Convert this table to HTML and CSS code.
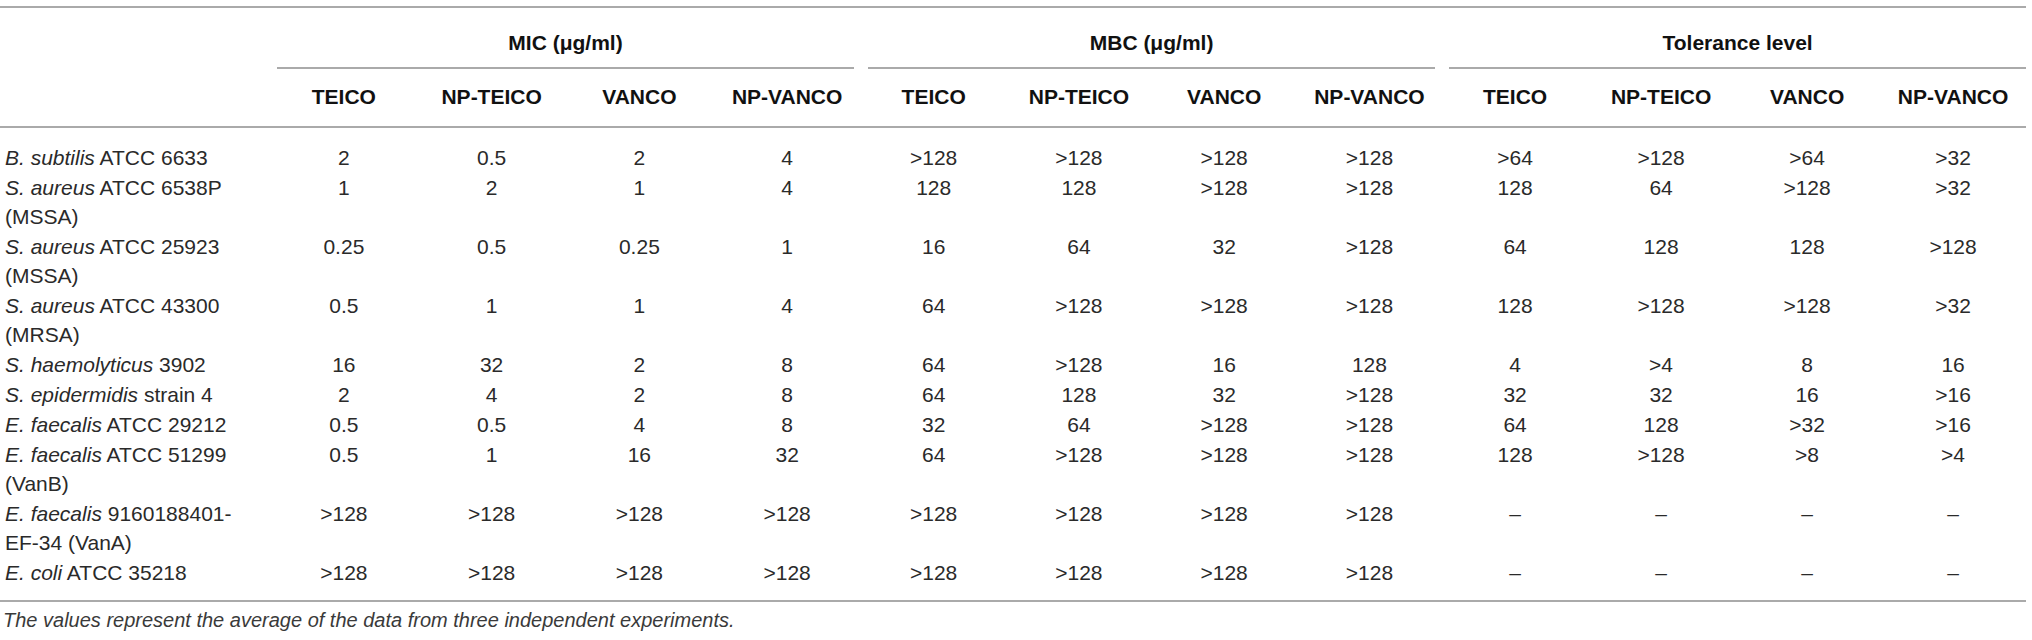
FILE: index.html
```html
<!DOCTYPE html>
<html lang="en">
<head>
    <meta charset="UTF-8">
    <title>MIC / MBC table</title>
    <link rel="stylesheet" href="styles.css">
</head>
<body>

<div class="wrap">
<table class="data">
    <colgroup>
        <col class="strain-col">
        <col span="4" class="mic-col">
        <col span="4" class="mbc-col">
        <col span="4" class="tol-col">
    </colgroup>
    <thead>
        <tr class="group-row">
            <th></th>
            <th colspan="4" class="group"><div class="group-title">MIC (μg/ml)</div></th>
            <th colspan="4" class="group"><div class="group-title">MBC (μg/ml)</div></th>
            <th colspan="4" class="group last"><div class="group-title">Tolerance level</div></th>
        </tr>
        <tr class="col-row">
            <th></th>
            <th>TEICO</th><th>NP-TEICO</th><th>VANCO</th><th>NP-VANCO</th>
            <th>TEICO</th><th>NP-TEICO</th><th>VANCO</th><th>NP-VANCO</th>
            <th>TEICO</th><th>NP-TEICO</th><th>VANCO</th><th>NP-VANCO</th>
        </tr>
    </thead>
    <tbody>
        <tr>
            <td class="strain"><i>B. subtilis</i> ATCC 6633</td>
            <td>2</td><td>0.5</td><td>2</td><td>4</td>
            <td>&gt;128</td><td>&gt;128</td><td>&gt;128</td><td>&gt;128</td>
            <td>&gt;64</td><td>&gt;128</td><td>&gt;64</td><td>&gt;32</td>
        </tr>
        <tr>
            <td class="strain"><i>S. aureus</i> ATCC 6538P<br>(MSSA)</td>
            <td>1</td><td>2</td><td>1</td><td>4</td>
            <td>128</td><td>128</td><td>&gt;128</td><td>&gt;128</td>
            <td>128</td><td>64</td><td>&gt;128</td><td>&gt;32</td>
        </tr>
        <tr>
            <td class="strain"><i>S. aureus</i> ATCC 25923<br>(MSSA)</td>
            <td>0.25</td><td>0.5</td><td>0.25</td><td>1</td>
            <td>16</td><td>64</td><td>32</td><td>&gt;128</td>
            <td>64</td><td>128</td><td>128</td><td>&gt;128</td>
        </tr>
        <tr>
            <td class="strain"><i>S. aureus</i> ATCC 43300<br>(MRSA)</td>
            <td>0.5</td><td>1</td><td>1</td><td>4</td>
            <td>64</td><td>&gt;128</td><td>&gt;128</td><td>&gt;128</td>
            <td>128</td><td>&gt;128</td><td>&gt;128</td><td>&gt;32</td>
        </tr>
        <tr>
            <td class="strain"><i>S. haemolyticus</i> 3902</td>
            <td>16</td><td>32</td><td>2</td><td>8</td>
            <td>64</td><td>&gt;128</td><td>16</td><td>128</td>
            <td>4</td><td>&gt;4</td><td>8</td><td>16</td>
        </tr>
        <tr>
            <td class="strain"><i>S. epidermidis</i> strain 4</td>
            <td>2</td><td>4</td><td>2</td><td>8</td>
            <td>64</td><td>128</td><td>32</td><td>&gt;128</td>
            <td>32</td><td>32</td><td>16</td><td>&gt;16</td>
        </tr>
        <tr>
            <td class="strain"><i>E. faecalis</i> ATCC 29212</td>
            <td>0.5</td><td>0.5</td><td>4</td><td>8</td>
            <td>32</td><td>64</td><td>&gt;128</td><td>&gt;128</td>
            <td>64</td><td>128</td><td>&gt;32</td><td>&gt;16</td>
        </tr>
        <tr>
            <td class="strain"><i>E. faecalis</i> ATCC 51299<br>(VanB)</td>
            <td>0.5</td><td>1</td><td>16</td><td>32</td>
            <td>64</td><td>&gt;128</td><td>&gt;128</td><td>&gt;128</td>
            <td>128</td><td>&gt;128</td><td>&gt;8</td><td>&gt;4</td>
        </tr>
        <tr>
            <td class="strain"><i>E. faecalis</i> 9160188401-<br>EF-34 (VanA)</td>
            <td>&gt;128</td><td>&gt;128</td><td>&gt;128</td><td>&gt;128</td>
            <td>&gt;128</td><td>&gt;128</td><td>&gt;128</td><td>&gt;128</td>
            <td>–</td><td>–</td><td>–</td><td>–</td>
        </tr>
        <tr>
            <td class="strain"><i>E. coli</i> ATCC 35218</td>
            <td>&gt;128</td><td>&gt;128</td><td>&gt;128</td><td>&gt;128</td>
            <td>&gt;128</td><td>&gt;128</td><td>&gt;128</td><td>&gt;128</td>
            <td>–</td><td>–</td><td>–</td><td>–</td>
        </tr>
    </tbody>
</table>

<p class="footnote">The values represent the average of the data from three independent experiments.</p>
</div>

</body>
</html>
```

FILE: styles.css
```css
body {
    margin: 0;
    background-color: #fff;
    font-family: "Liberation Sans", Arial, sans-serif;
    color: #2a2a2a;
}
.wrap {
    width: 2026px;
    padding-top: 6px;
}
.data {
    width: 100%;
    table-layout: fixed;
    border-collapse: collapse;
    font-size: 21px;
    line-height: 29px;
}
.strain-col {
    width: 270px;
}
.mic-col {
    width: 147.75px;
}
.mbc-col {
    width: 145.25px;
}
.tol-col {
    width: 146px;
}
.data thead {
    border-top: 2px solid #aaa;
    border-bottom: 2px solid #aaa;
}
.data tbody {
    border-bottom: 2px solid #aaa;
}
th {
    font-weight: bold;
    color: #111;
    text-align: center;
    padding: 0;
}
th.group {
    padding: 0 7px;
}
th.group.last {
    padding-right: 0;
}
.group-title {
    padding: 20px 0 10px;
    border-bottom: 2px solid #aaa;
}
.col-row th {
    padding: 13px 0 15px;
}
td {
    padding: 0 0 1px;
    text-align: center;
    vertical-align: top;
}
td.strain {
    text-align: left;
    padding-left: 5px;
}
tbody tr:first-child td {
    padding-top: 15px;
}
tbody tr:last-child td {
    padding-bottom: 13px;
}
.footnote {
    margin: 0;
    padding: 6px 0 0 3px;
    font-size: 20px;
    line-height: 24px;
    font-style: italic;
    color: #3a3a3a;
}
```
